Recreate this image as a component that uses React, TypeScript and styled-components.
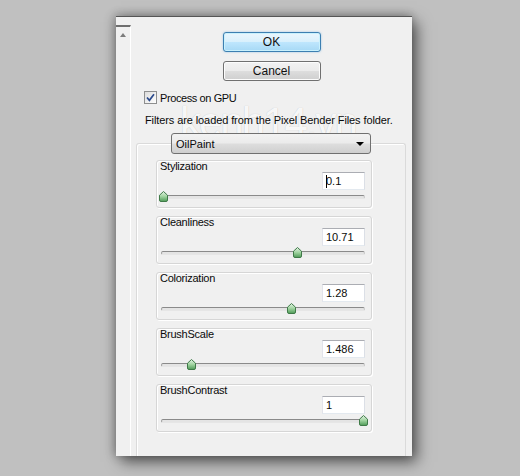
import React from "react";
import styled, { createGlobalStyle } from "styled-components";

const Global = createGlobalStyle`
  html, body { margin: 0; padding: 0; }
  body {
    background: #c0c0c0;
    width: 520px;
    height: 476px;
    overflow: hidden;
    font-family: "Liberation Sans", Arial, sans-serif;
    font-size: 11px;
    color: #0a0a0a;
  }
`;

const Stage = styled.div`
  padding: 16px 0 0 116px;
`;

const Window = styled.div`
  position: relative;
  width: 296px;
  height: 440px;
  box-sizing: border-box;
  display: flex;
  background: #f0f0f0;
  border-top: 1px solid #555;
  box-shadow: 5px 6px 14px rgba(0, 0, 0, 0.55), -3px 0 10px rgba(0, 0, 0, 0.18),
    0 -3px 8px rgba(0, 0, 0, 0.12);
`;

const Strip = styled.div`
  position: relative;
  z-index: 1;
  width: 14px;
  margin-top: 8px;
  border-top: 2px solid #6e6e6e;
  border-right: 1px solid #ffffff;
  display: flex;
  justify-content: center;
  padding-top: 6px;
  box-sizing: content-box;
`;

const UpArrow = styled.div`
  width: 0;
  height: 0;
  border-left: 3.5px solid transparent;
  border-right: 3.5px solid transparent;
  border-bottom: 4px solid #7c7c7c;
`;

const Main = styled.div`
  position: relative;
  z-index: 1;
  flex: 1;
  display: flex;
  flex-direction: column;
  padding-top: 15px;
`;

const ButtonCol = styled.div`
  display: flex;
  flex-direction: column;
  align-items: center;
  gap: 9px;
`;

const Button = styled.button<{ $default?: boolean }>`
  width: 98px;
  height: 20px;
  box-sizing: border-box;
  margin: 0;
  padding: 0;
  font-family: "Liberation Sans", Arial, sans-serif;
  font-size: 12px;
  color: #111;
  border-radius: 3px;
  border: 1px solid ${(p) => (p.$default ? "#3c7fb1" : "#707070")};
  background: ${(p) =>
    p.$default
      ? "linear-gradient(#eaf6fd 0%, #d9f0fc 48%, #bee6fd 52%, #a7d9f5 100%)"
      : "linear-gradient(#f2f2f2 0%, #ebebeb 48%, #dddddd 52%, #cfcfcf 100%)"};
  box-shadow: ${(p) =>
    p.$default
      ? "inset 0 0 0 1px #c9f1fd, 0 0 2px rgba(80,160,220,0.6)"
      : "inset 0 0 0 1px #fcfcfc"};
`;

const CheckRow = styled.label`
  display: flex;
  align-items: center;
  margin-top: 10px;
  padding-left: 13px;
  height: 13px;
  font-size: 11px;
  letter-spacing: -0.4px;
`;

const CheckBox = styled.span`
  width: 13px;
  height: 13px;
  box-sizing: border-box;
  border: 1px solid #8e8f8f;
  background: linear-gradient(135deg, #dcdcdc, #ffffff);
  display: flex;
  align-items: center;
  justify-content: center;
  margin-right: 3px;
`;

const InfoText = styled.div`
  margin-top: 9px;
  padding-left: 14px;
  line-height: 14px;
  font-size: 11px;
  letter-spacing: -0.1px;
  white-space: nowrap;
`;

const OuterGroup = styled.div`
  flex: 1;
  margin: 16px 0 0 5px;
  width: 270px;
  box-sizing: border-box;
  border: 1px solid #dadada;
  border-bottom: none;
  border-radius: 3px 3px 0 0;
  box-shadow: inset 1px 1px 0 #ffffff;
  display: flex;
  flex-direction: column;
`;

const Dropdown = styled.div`
  margin: -11px 0 0 34px;
  width: 200px;
  height: 21px;
  box-sizing: border-box;
  border: 1px solid #707070;
  border-radius: 3px;
  background: linear-gradient(#f2f2f2 0%, #ebebeb 48%, #dddddd 52%, #cfcfcf 100%);
  display: flex;
  align-items: center;
  justify-content: space-between;
  padding: 0 6px 0 4px;
  font-size: 11px;
`;

const DownArrow = styled.span`
  width: 0;
  height: 0;
  border-left: 4px solid transparent;
  border-right: 4px solid transparent;
  border-top: 4px solid #000;
`;

const ParamList = styled.div`
  display: flex;
  flex-direction: column;
  gap: 8px;
  margin: 6px 0 0 19px;
`;

const ParamBox = styled.div`
  width: 216px;
  height: 48px;
  box-sizing: border-box;
  border: 1px solid #d6d6d6;
  border-radius: 3px;
  box-shadow: inset 1px 1px 0 #ffffff, 1px 1px 0 #ffffff;
  display: flex;
  flex-direction: column;
`;

const ParamLabel = styled.div`
  height: 11px;
  line-height: 11px;
  padding-left: 3px;
  font-size: 11px;
  letter-spacing: -0.25px;
  margin-top: 0px;
`;

const InputRow = styled.div`
  display: flex;
  justify-content: flex-end;
  padding-right: 6px;
`;

const ValueInput = styled.div`
  width: 43px;
  height: 18px;
  box-sizing: border-box;
  background: #fff;
  border: 1px solid;
  border-color: #abadb3 #dbdfe6 #e3e9ef #e2e3ea;
  padding-left: 3px;
  font-size: 11px;
  line-height: 16px;
  display: flex;
  align-items: center;
`;

const Caret = styled.span`
  display: inline-block;
  width: 1px;
  height: 13px;
  background: #000;
  margin-right: -1px;
`;

const Slider = styled.div`
  position: relative;
  height: 13px;
  margin: 0 6px 0 4px;
`;

const Track = styled.div`
  margin-top: 5px;
  height: 4px;
  box-sizing: border-box;
  border: 1px solid;
  border-color: #8a8a8a #c8c8c8 #e6e6e6 #a0a0a0;
  border-radius: 2px;
  background: #e4e4e4;
`;

const ThumbWrap = styled.svg`
  position: absolute;
  top: 1px;
`;

const Watermark = styled.div`
  position: absolute;
  left: 64px;
  top: 85px;
  line-height: 1;
  font-family: "Liberation Sans", Arial, sans-serif;
  font-size: 42px;
  letter-spacing: -2px;
  color: rgba(255, 255, 255, 0.9);
  text-shadow: 0 0 1px rgba(0, 0, 0, 0.22);
  pointer-events: none;
  white-space: nowrap;
`;

const params = [
  { name: "Stylization", value: "0.1", f: 0, caret: true },
  { name: "Cleanliness", value: "10.71", f: 0.67 },
  { name: "Colorization", value: "1.28", f: 0.64 },
  { name: "BrushScale", value: "1.486", f: 0.14 },
  { name: "BrushContrast", value: "1", f: 1 },
];

function Thumb({ f }: { f: number }) {
  return (
    <ThumbWrap
      width="9"
      height="11"
      viewBox="0 0 9 11"
      style={{ left: `calc(${f} * (100% - 4px) - 2.5px)` }}
    >
      <defs>
        <linearGradient id="tg" x1="0" y1="0" x2="0" y2="1">
          <stop offset="0" stopColor="#e4f3e4" />
          <stop offset="0.5" stopColor="#9fd39f" />
          <stop offset="1" stopColor="#4f9a57" />
        </linearGradient>
      </defs>
      <path
        d="M4.5 0.5 L8.5 4.2 L8.5 9 Q8.5 10.5 7 10.5 L2 10.5 Q0.5 10.5 0.5 9 L0.5 4.2 Z"
        fill="url(#tg)"
        stroke="#3f7a48"
        strokeWidth="1"
      />
    </ThumbWrap>
  );
}

export default function App() {
  return (
    <>
      <Global />
      <Stage>
        <Window>
          <Watermark>kenh14.vn</Watermark>
          <Strip>
            <UpArrow />
          </Strip>
          <Main>
            <ButtonCol>
              <Button $default>OK</Button>
              <Button>Cancel</Button>
            </ButtonCol>
            <CheckRow>
              <CheckBox>
                <svg width="11" height="11" viewBox="0 0 11 11">
                  <path
                    d="M2 5.5 L4.4 8.3 L9 2.2"
                    fill="none"
                    stroke="#2b4a8c"
                    strokeWidth="1.7"
                  />
                </svg>
              </CheckBox>
              Process on GPU
            </CheckRow>
            <InfoText>Filters are loaded from the Pixel Bender Files folder.</InfoText>
            <OuterGroup>
              <Dropdown>
                <span>OilPaint</span>
                <DownArrow />
              </Dropdown>
              <ParamList>
                {params.map((p) => (
                  <ParamBox key={p.name}>
                    <ParamLabel>{p.name}</ParamLabel>
                    <InputRow>
                      <ValueInput>
                        {p.caret && <Caret />}
                        {p.value}
                      </ValueInput>
                    </InputRow>
                    <Slider>
                      <Track />
                      <Thumb f={p.f} />
                    </Slider>
                  </ParamBox>
                ))}
              </ParamList>
            </OuterGroup>
          </Main>
        </Window>
      </Stage>
    </>
  );
}
